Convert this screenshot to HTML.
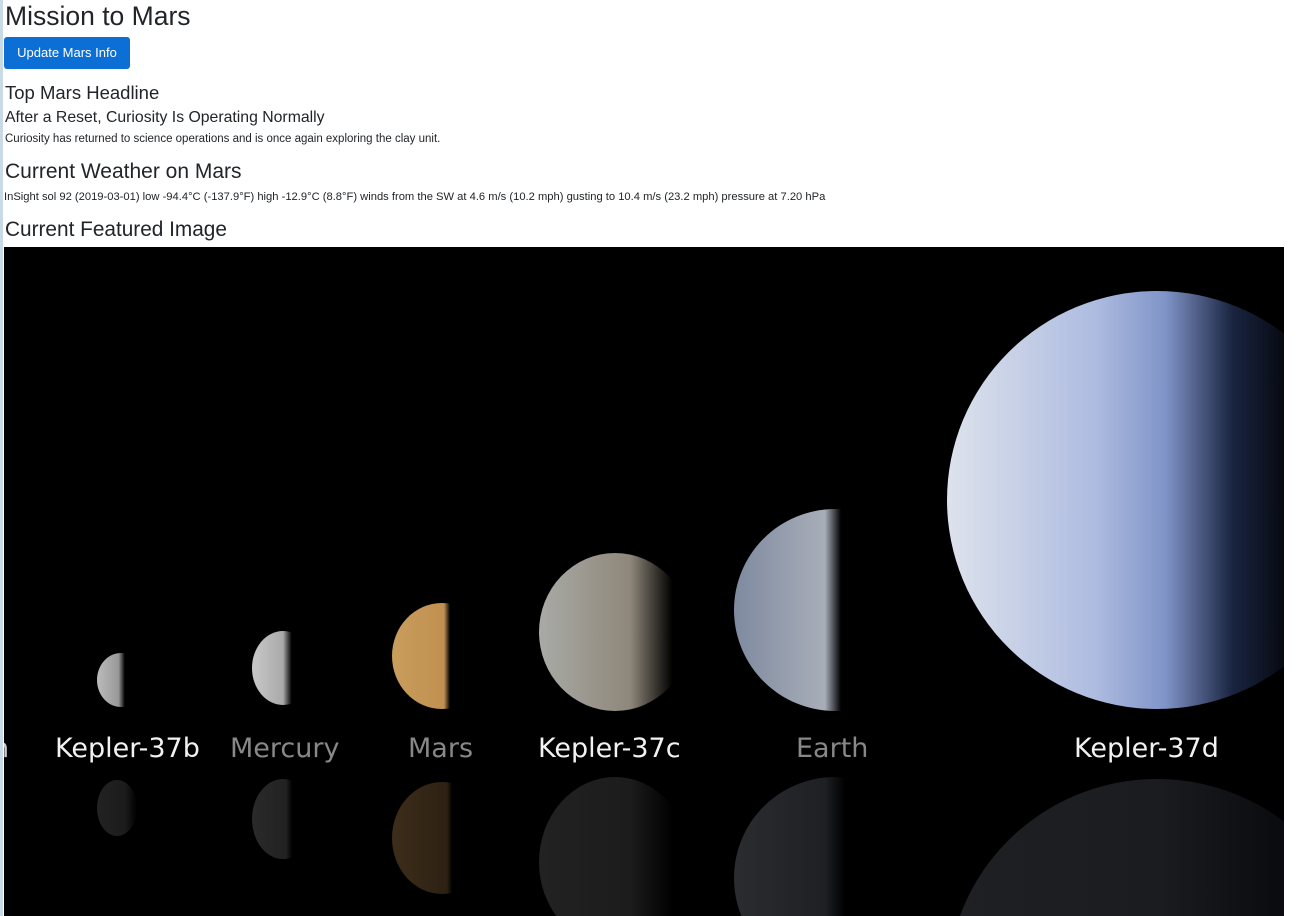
<!DOCTYPE html>
<html><head><meta charset="utf-8"><style>
html,body{margin:0;padding:0;background:#fff;width:1309px;height:916px;overflow:hidden;font-family:"Liberation Sans","DejaVu Sans",sans-serif;color:#212529}
.t{position:absolute;white-space:nowrap;left:5px;margin:0}
.btn{position:absolute;left:4px;top:37px;width:126px;height:32px;background:#0b6fd6;border-radius:3px;color:#fff;font-size:13px;line-height:32px;text-align:center}
.img{position:absolute;left:4px;top:247px;width:1280px;height:669px;background:#000;overflow:hidden}
.p{position:absolute;border-radius:50%}
.lbl{position:absolute;font-family:"DejaVu Sans","Liberation Sans",sans-serif;font-size:27px;top:486px;white-space:nowrap}
.edge{position:absolute;left:0;top:0;width:3px;height:916px;background:#c9d9e6}
</style></head><body>
<div class="edge"></div>
<div class="t" style="top:1px;font-size:26.5px">Mission to Mars</div>
<div class="btn">Update Mars Info</div>
<div class="t" style="top:82px;font-size:18.5px">Top Mars Headline</div>
<div class="t" style="top:109px;font-size:15.8px">After a Reset, Curiosity Is Operating Normally</div>
<div class="t" style="top:133px;font-size:11.5px">Curiosity has returned to science operations and is once again exploring the clay unit.</div>
<div class="t" style="top:160px;font-size:21px">Current Weather on Mars</div>
<div class="t" style="top:191px;font-size:11.2px;left:4px">InSight sol 92 (2019-03-01) low -94.4°C (-137.9°F) high -12.9°C (8.8°F) winds from the SW at 4.6 m/s (10.2 mph) gusting to 10.4 m/s (23.2 mph) pressure at 7.20 hPa</div>
<div class="t" style="top:218px;font-size:20.8px">Current Featured Image</div>
<div class="img">
 <div class="p" style="left:93px;top:406px;width:48px;height:54px;background:linear-gradient(90deg,#bbb 0%,#999 45%,#000 58%)"></div>
 <div class="p" style="left:248px;top:384px;width:62px;height:74px;background:linear-gradient(90deg,#c8c8c8,#aaa 50%,#000 64%)"></div>
 <div class="p" style="left:388px;top:356px;width:100px;height:106px;background:linear-gradient(90deg,#c99d5d,#c09050 52%,#000 58%)"></div>
 <div class="p" style="left:535px;top:306px;width:152px;height:158px;background:linear-gradient(90deg,#a9aaa6,#8f877a 60%,#000 88%)"></div>
 <div class="p" style="left:730px;top:262px;width:202px;height:202px;background:linear-gradient(90deg,#7f8aa0,#a8aeb8 45%,#000 53%)"></div>
 <div class="p" style="left:943px;top:44px;width:420px;height:418px;background:linear-gradient(90deg,#dde2ec,#aebce0 35%,#8094c8 52%,#1a2440 68%,#000 85%)"></div>
 <div class="p" style="left:93px;top:533px;width:40px;height:56px;background:linear-gradient(90deg,#222,#1c1c1c 70%,#000)"></div>
 <div class="p" style="left:248px;top:532px;width:62px;height:80px;background:linear-gradient(90deg,#2a2a2a,#222 55%,#000 65%)"></div>
 <div class="p" style="left:388px;top:535px;width:100px;height:112px;background:linear-gradient(90deg,#3d2d1a,#2d2113 55%,#000 60%)"></div>
 <div class="p" style="left:535px;top:530px;width:152px;height:170px;background:linear-gradient(90deg,#222,#1c1c1c 60%,#000 88%)"></div>
 <div class="p" style="left:730px;top:530px;width:202px;height:202px;background:linear-gradient(90deg,#2a2c30,#1e2024 45%,#000 55%)"></div>
 <div class="p" style="left:943px;top:532px;width:420px;height:418px;background:linear-gradient(90deg,#1e2024,#1b1c20 50%,#0a0b0e 80%)"></div>
 <div class="lbl" style="left:-12px;color:#ccc">n</div>
 <div class="lbl" style="left:51px;color:#f2f2f2">Kepler-37b</div>
 <div class="lbl" style="left:226px;color:#888">Mercury</div>
 <div class="lbl" style="left:404px;color:#888">Mars</div>
 <div class="lbl" style="left:534px;color:#f2f2f2">Kepler-37c</div>
 <div class="lbl" style="left:792px;color:#888">Earth</div>
 <div class="lbl" style="left:1070px;color:#f2f2f2">Kepler-37d</div>
</div>
</body></html>
